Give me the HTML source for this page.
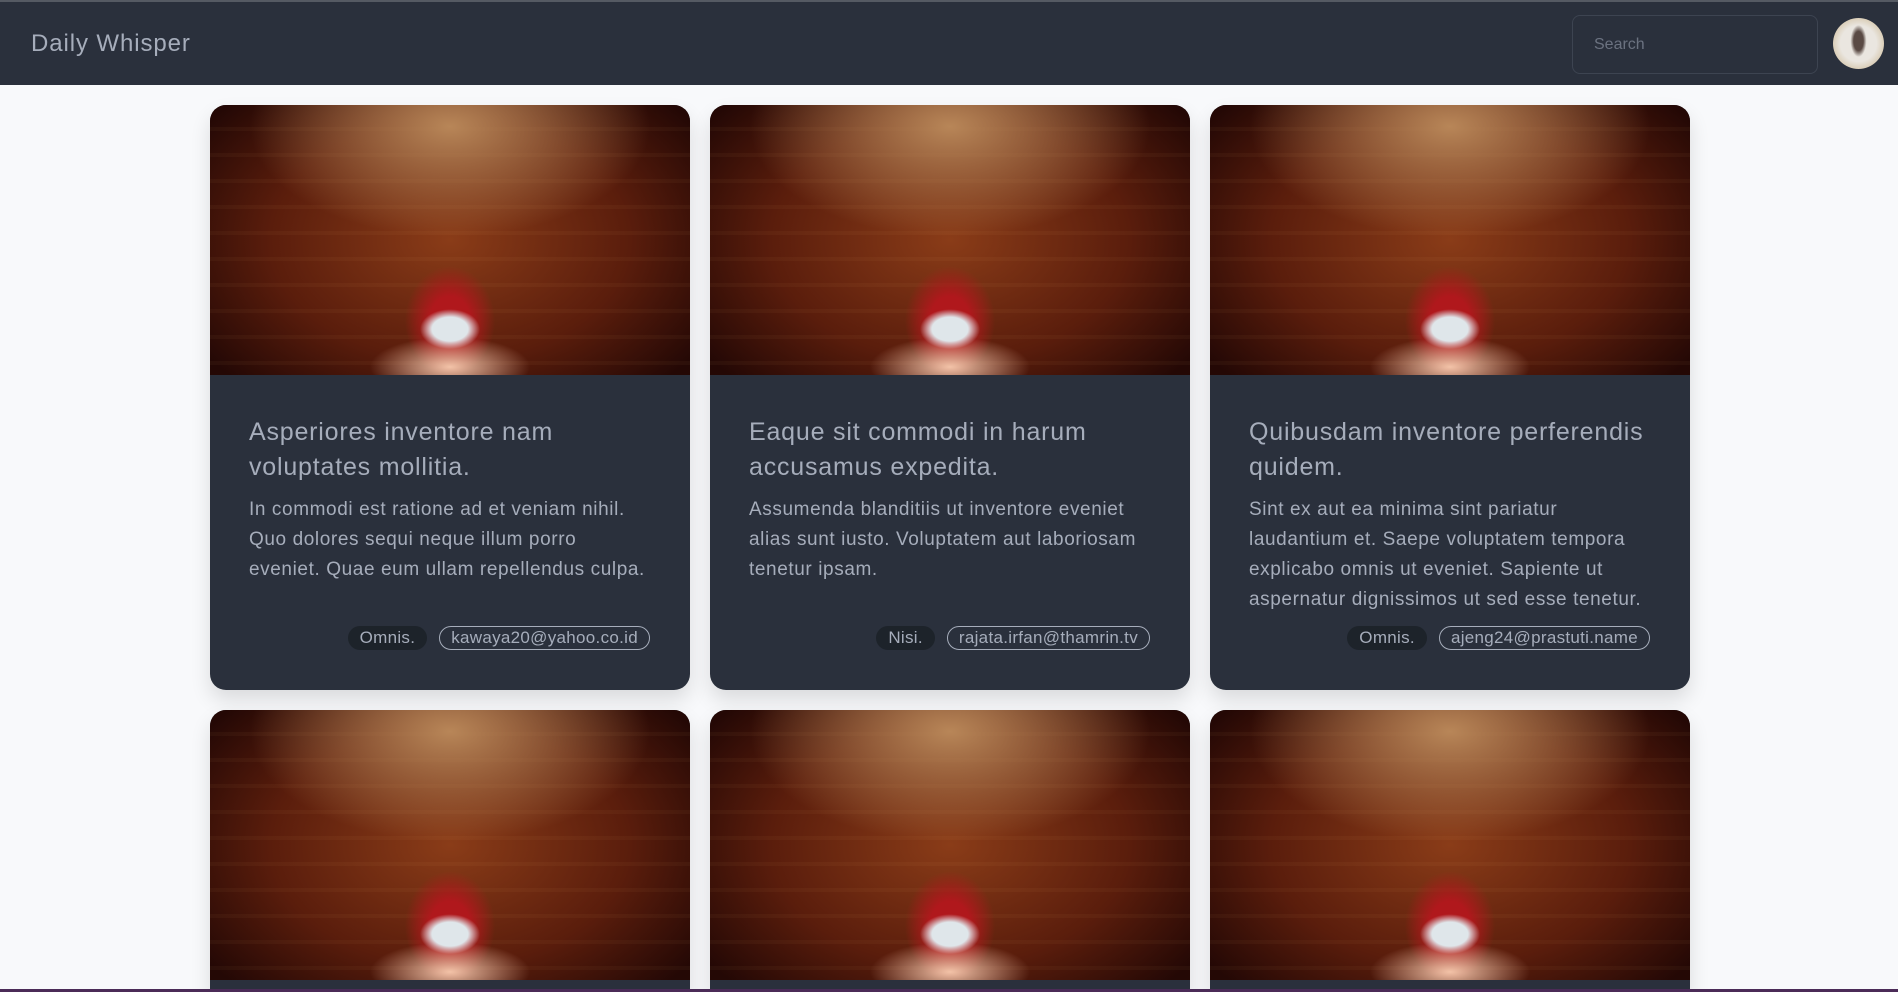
<!DOCTYPE html>
<html><head><meta charset="utf-8"><style>
*{box-sizing:border-box;margin:0;padding:0}
html,body{width:1898px;height:992px;overflow:hidden}
body{background:#f8f9fb;font-family:"Liberation Sans",sans-serif;position:relative}
.wrap{position:absolute;left:0;top:0;width:1898px;height:992px;overflow:hidden}
.nav{position:absolute;left:0;top:0;width:1898px;height:85px;background:#2a303c;border-top:2px solid #555a63}
.brand{position:absolute;left:31px;top:28px;font-size:24px;color:#a6adbb;letter-spacing:0.9px}
.search{position:absolute;left:1572px;top:13px;width:246px;height:59px;border:1px solid #3d4451;border-radius:8px;color:#6b7280;font-size:16px;padding:20px 0 0 21px}
.av{position:absolute;left:1833px;top:16px;width:51px;height:51px;border-radius:50%;background:radial-gradient(ellipse 8px 16px at 50% 45%,#5a4a44 0 60%,transparent 100%),radial-gradient(circle at 50% 50%,#eae6e0 0 50%,#d7c9b0 75%,#b9a382 100%)}
.grid{position:absolute;left:210px;top:105px;display:grid;grid-template-columns:480px 480px 480px;gap:20px}
.card{background:#2a303c;border-radius:16px;overflow:hidden;display:flex;flex-direction:column;height:585px;box-shadow:0 10px 20px rgba(0,0,0,.12)}
.card.s{height:282px;border-radius:16px 16px 0 0}
.img{height:270px;flex:none;background:
radial-gradient(ellipse 30px 20px at 50% 83%,#dfe6ea 0 60%,transparent 100%),
radial-gradient(ellipse 80px 30px at 50% 97%,#f3c3a8 0,transparent 100%),
radial-gradient(ellipse 45px 55px at 50% 80%,#b0181c 0 45%,transparent 100%),
radial-gradient(ellipse 200px 110px at 50% 8%,#b88658 0,transparent 100%),
repeating-linear-gradient(180deg,transparent 0 22px,rgba(255,200,120,.04) 22px 26px),
radial-gradient(ellipse 300px 200px at 50% 50%,#8a3c18 0,#5a1d0c 60%,#240805 100%)}
.body{padding:40px 40px 40px 39px;flex:1;display:flex;flex-direction:column;color:#a6adbb}
h2{font-size:25px;font-weight:normal;line-height:35px;letter-spacing:0.8px}
p{font-size:19px;line-height:30px;margin-top:10px;letter-spacing:0.6px}
.act{margin-top:auto;display:flex;justify-content:flex-end;gap:12px;font-size:17px;letter-spacing:0.3px}
.b1{background:#1d232a;border-radius:12px;padding:2px 12px;height:24px;line-height:20px}
.b2{border:1px solid #a6adbb;border-radius:12px;padding:1px 11px;height:24px;line-height:20px}
.bot{position:absolute;left:0;top:989px;width:1898px;height:3px;background:#4b2b57}
</style></head><body><div class="wrap">
<div class="nav"><div class="brand">Daily Whisper</div><div class="search">Search</div><div class="av"></div></div>
<div class="grid">
<div class="card"><div class="img"></div><div class="body"><h2>Asperiores inventore nam voluptates mollitia.</h2><p>In commodi est ratione ad et veniam nihil. Quo dolores sequi neque illum porro eveniet. Quae eum ullam repellendus culpa.</p><div class="act"><span class="b1">Omnis.</span><span class="b2">kawaya20@yahoo.co.id</span></div></div></div>
<div class="card"><div class="img"></div><div class="body"><h2>Eaque sit commodi in harum accusamus expedita.</h2><p>Assumenda blanditiis ut inventore eveniet alias sunt iusto. Voluptatem aut laboriosam tenetur ipsam.</p><div class="act"><span class="b1">Nisi.</span><span class="b2">rajata.irfan@thamrin.tv</span></div></div></div>
<div class="card"><div class="img"></div><div class="body"><h2>Quibusdam inventore perferendis quidem.</h2><p>Sint ex aut ea minima sint pariatur laudantium et. Saepe voluptatem tempora explicabo omnis ut eveniet. Sapiente ut aspernatur dignissimos ut sed esse tenetur.</p><div class="act"><span class="b1">Omnis.</span><span class="b2">ajeng24@prastuti.name</span></div></div></div>
<div class="card s"><div class="img"></div></div>
<div class="card s"><div class="img"></div></div>
<div class="card s"><div class="img"></div></div>
</div>
<div class="bot"></div>
</div></body></html>
